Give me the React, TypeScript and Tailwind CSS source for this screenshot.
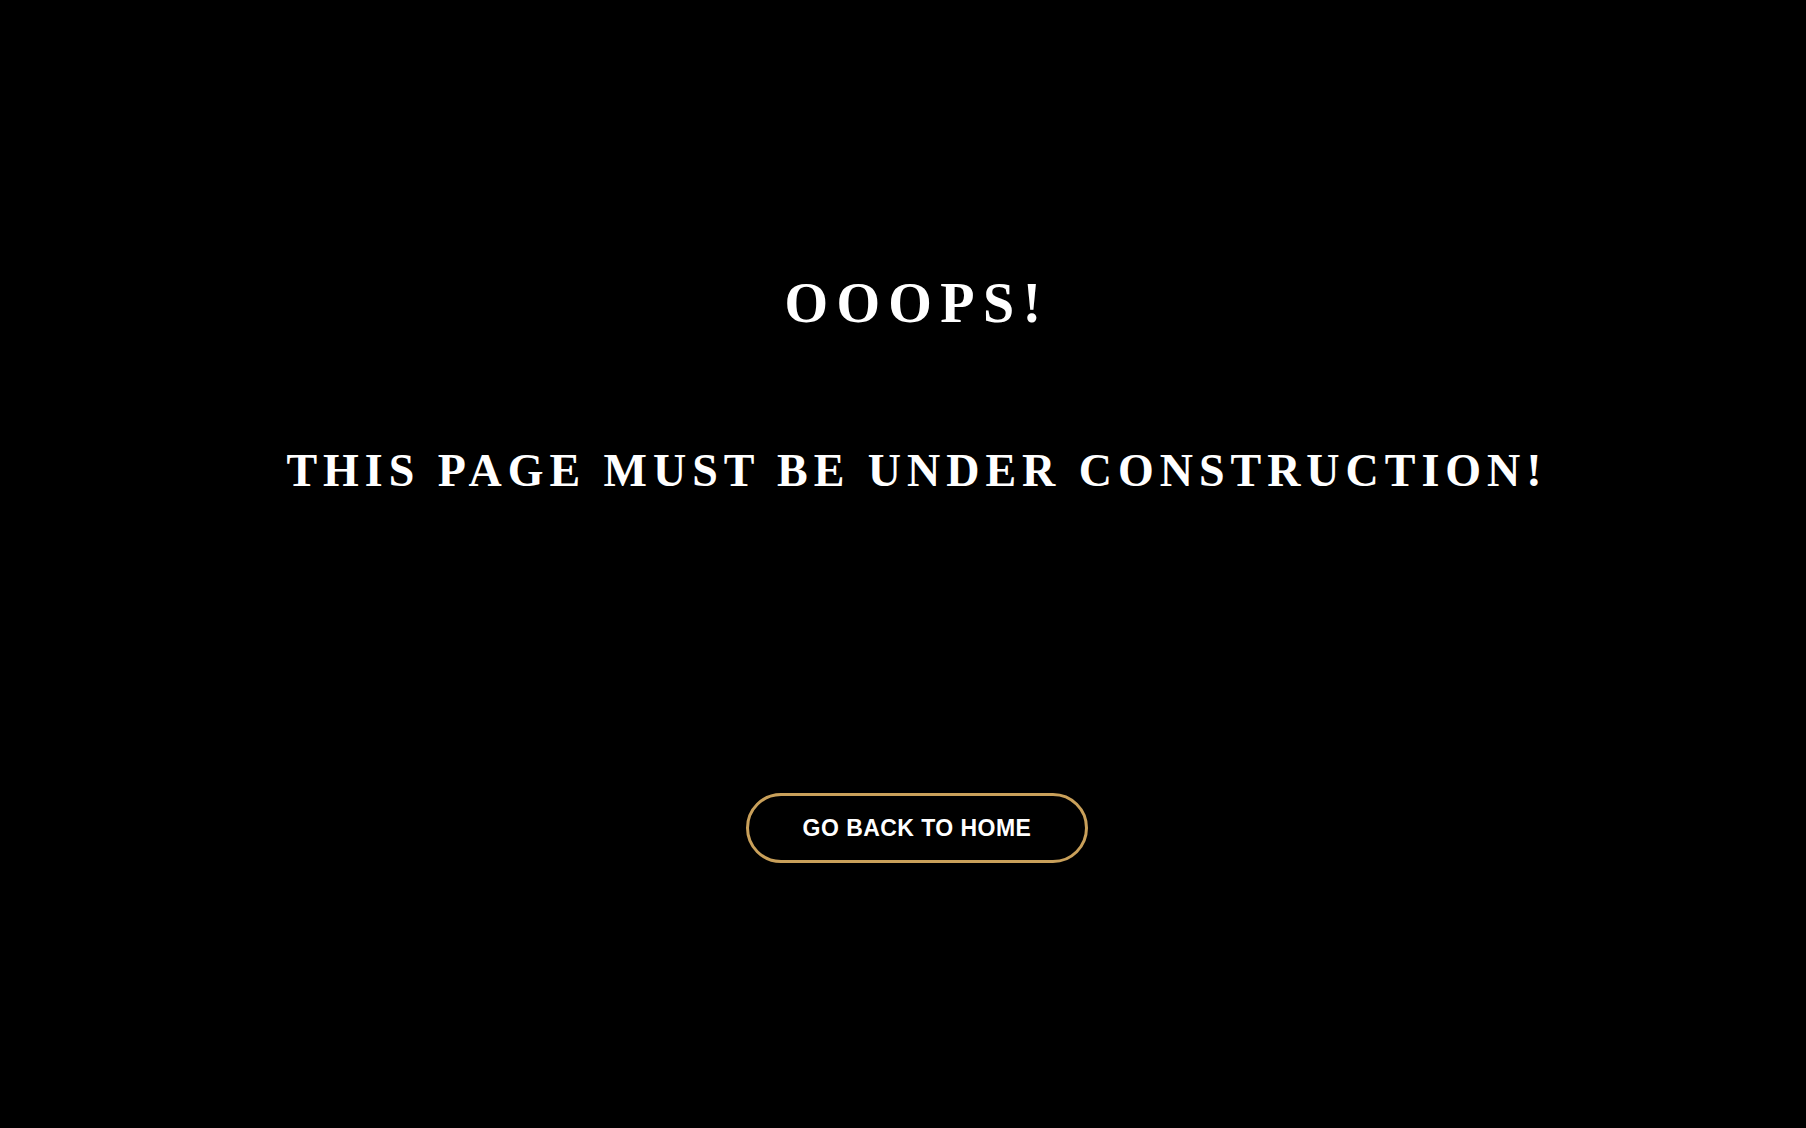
const App = () => {
  return (
    <div className="min-h-screen w-full bg-black pl-[28px] text-white">
      <div className="flex flex-col items-center pt-[270px]">
        <h1 className="font-['Liberation_Serif','Times_New_Roman',serif] text-[56px] font-bold uppercase leading-[1.2] tracking-[0.15em]">
          Ooops!
        </h1>
        <h2 className="mt-[106px] font-['Liberation_Serif','Times_New_Roman',serif] text-[46px] font-bold uppercase leading-[1.2] tracking-[0.13em]">
          This page must be under construction!
        </h2>
        <a
          href="#"
          className="mt-[295px] flex h-[70px] w-[342px] items-center justify-center rounded-full border-[3px] border-[#c9a05a] font-['Liberation_Sans',Arial,sans-serif] text-[23px] font-bold uppercase tracking-[0.02em] text-white"
        >
          Go back to home
        </a>
      </div>
    </div>
  );
};

export default App;
